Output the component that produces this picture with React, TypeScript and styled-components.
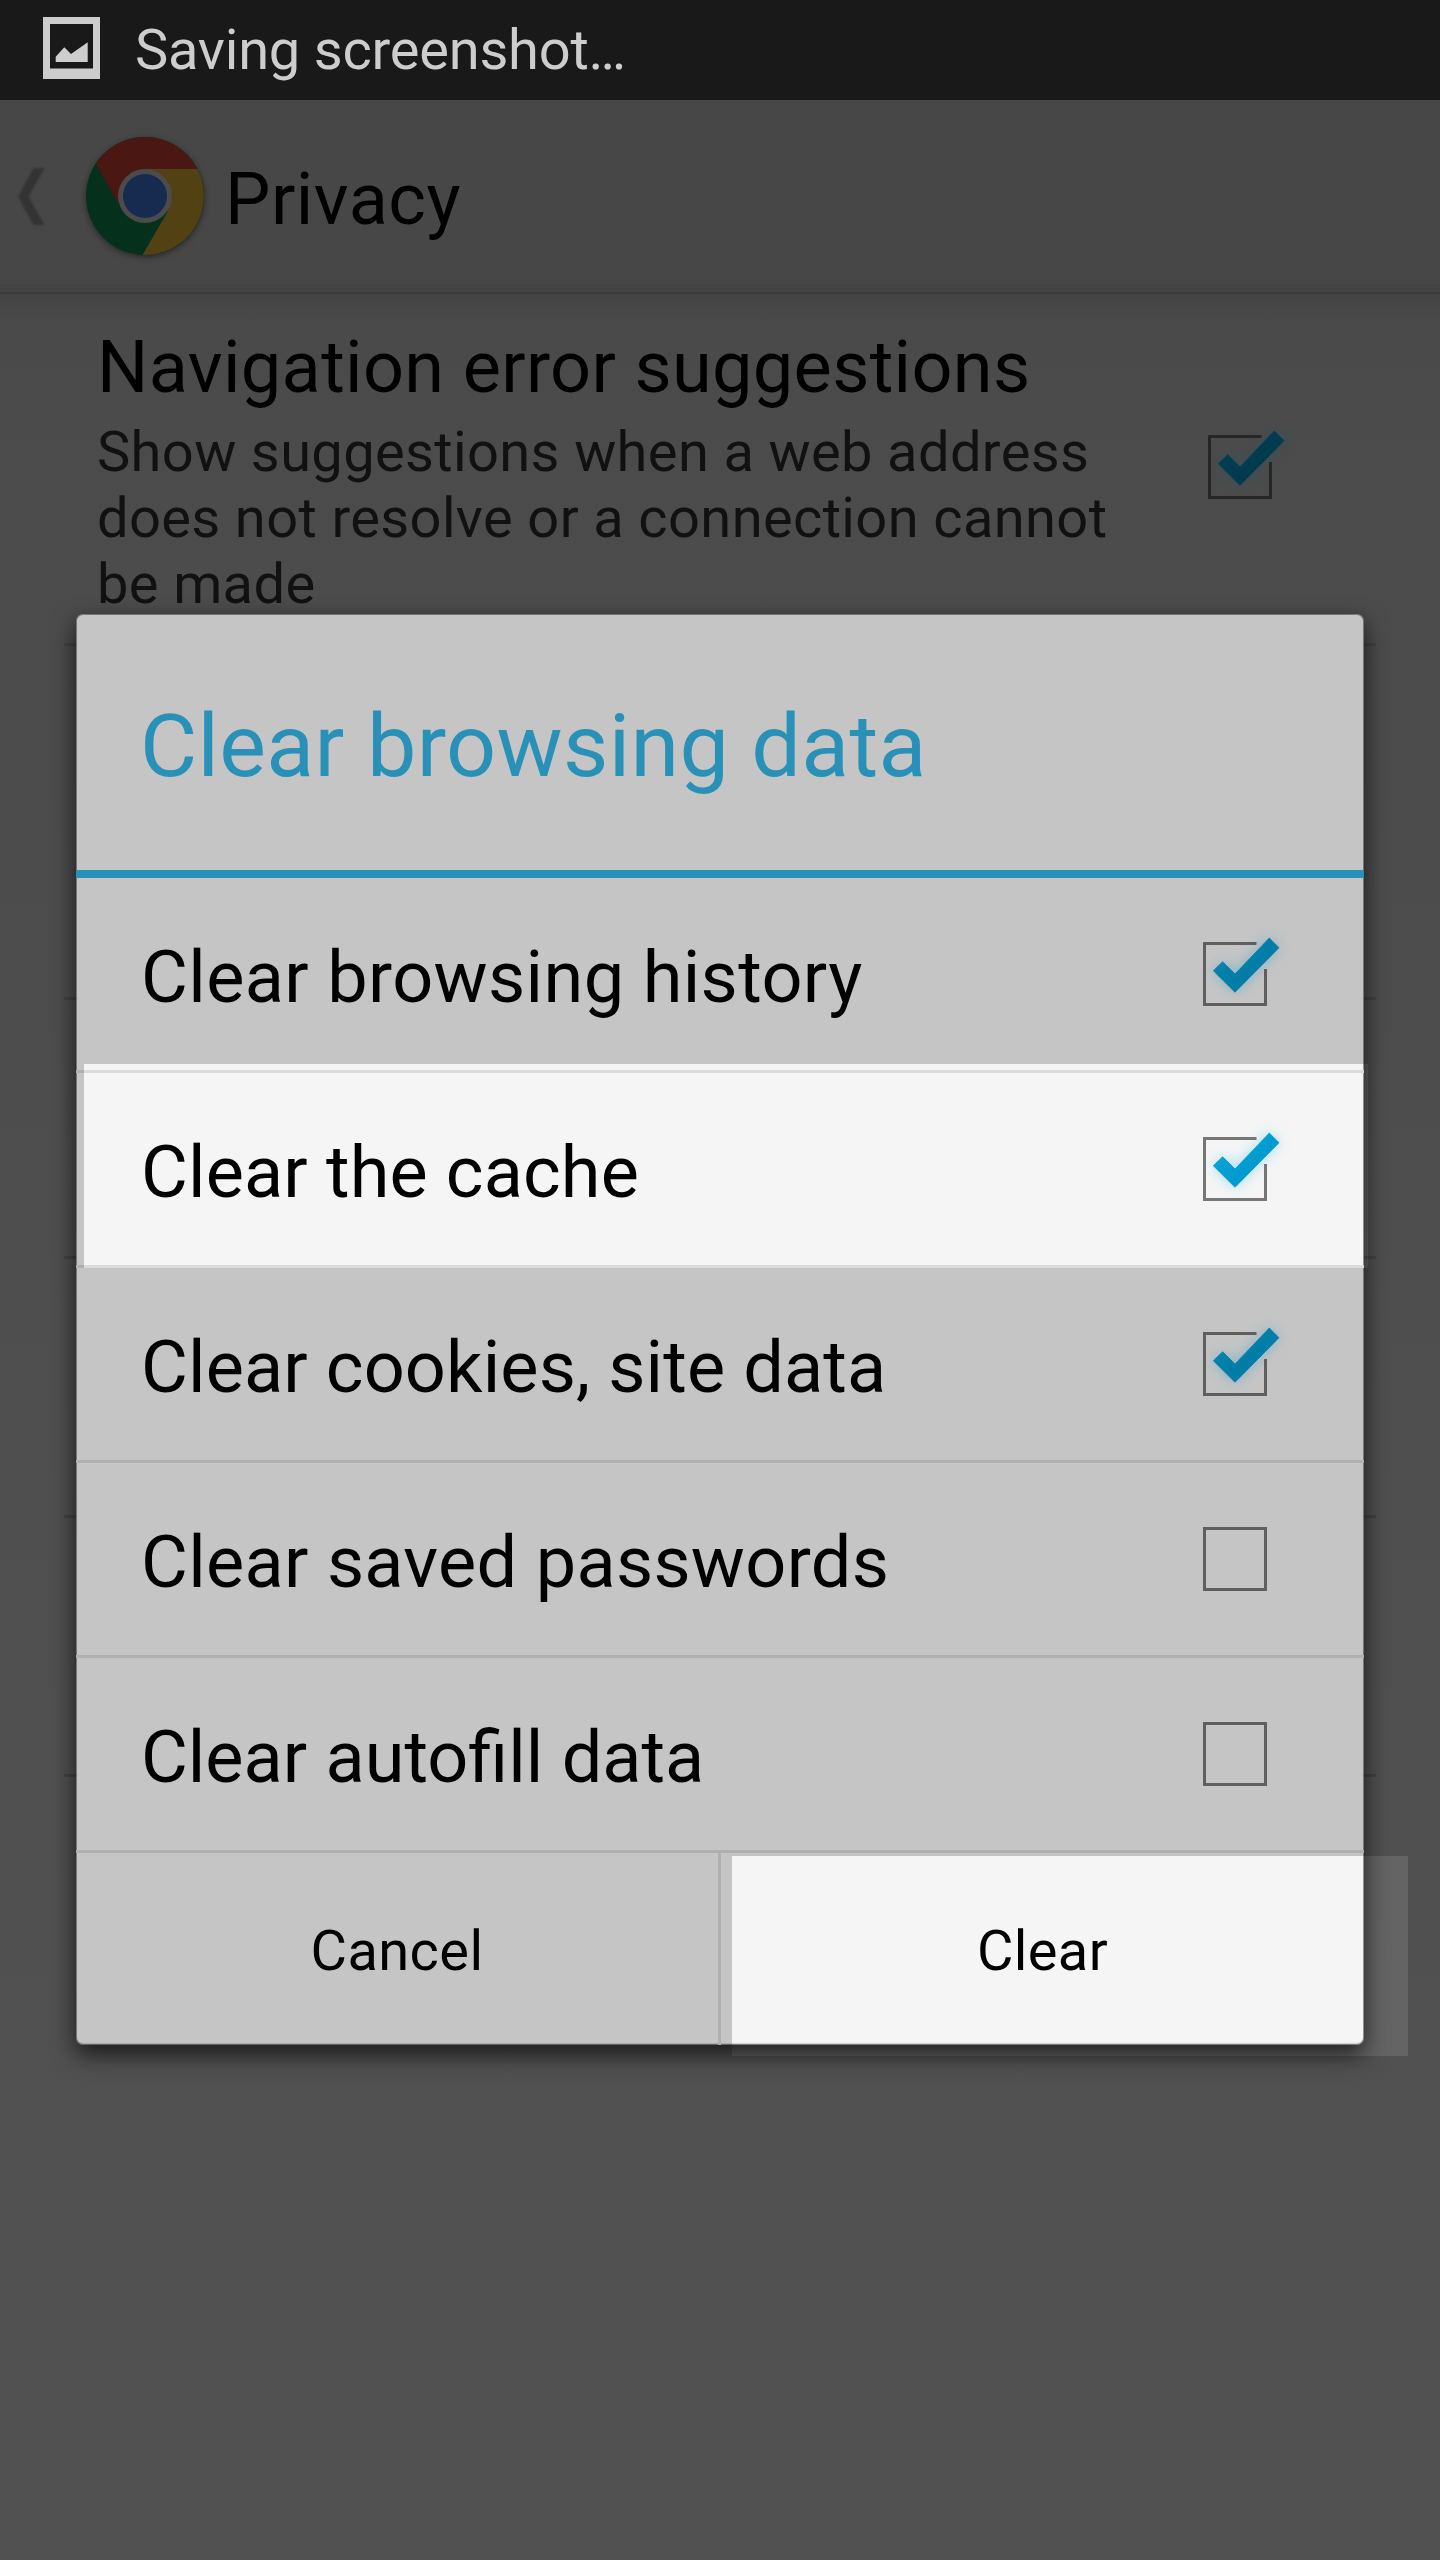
import React, { useState } from "react";
import styled, { createGlobalStyle, css } from "styled-components";

const GlobalStyle = createGlobalStyle`
  *, *::before, *::after { box-sizing: border-box; }
  body { margin: 0; background: #515151; }
`;

const Screen = styled.div`
  position: relative;
  display: flex;
  flex-direction: column;
  width: 1440px;
  height: 2560px;
  overflow: hidden;
  background: linear-gradient(#494949 295px, #4b4b4b 420px, #4d4d4d 950px, #505050 1700px, #515151);
  font-family: Roboto, "Liberation Sans", sans-serif;
  color: #000;
`;

const StatusBar = styled.header`
  display: flex;
  align-items: center;
  flex: none;
  height: 100px;
  padding-left: 43px;
  gap: 35px;
  background: #191919;
  color: #cdcdcd;
`;

const StatusIcon = styled.svg`
  width: 57px;
  height: 62px;
  margin-top: -4px;
`;

const StatusText = styled.span`
  font-size: 56px;
  line-height: 66px;
  letter-spacing: -0.22px;
`;

const ActionBar = styled.nav`
  display: flex;
  align-items: center;
  flex: none;
  height: 195px;
  padding-bottom: 3px;
  background: linear-gradient(
    #474747 184px,
    #444444 184px,
    #434343 192px,
    #3a3a3a 192px,
    #3d3d3d 194px,
    #434343 194px
  );
`;

const BackChevron = styled.svg`
  width: 27px;
  height: 57px;
  margin-left: 18px;
  overflow: visible;
  filter: blur(1px);
`;

const ChromeLogo = styled.svg`
  width: 118px;
  height: 118px;
  margin-left: 41px;
  overflow: visible;
  filter: drop-shadow(0 2px 3px rgba(0, 0, 0, 0.45));
`;

const ScreenTitle = styled.h1`
  margin: 0 0 0 21px;
  padding-top: 7px;
  font-size: 72px;
  font-weight: 400;
  line-height: 85px;
  letter-spacing: 0.5px;
`;

const PreferenceList = styled.main`
  display: flex;
  flex-direction: column;
  padding: 0 64px;
  background: linear-gradient(rgba(0, 0, 0, 0.06), transparent 30px);
`;

const Preference = styled.section<{ $height: number }>`
  display: flex;
  justify-content: space-between;
  height: ${(p) => p.$height}px;
  padding: 30px 104px 0 33px;
  border-bottom: 3px solid #424242;
`;

const PreferenceText = styled.div`
  display: flex;
  flex-direction: column;
  gap: 9px;
  width: 1060px;
`;

const PreferenceName = styled.h2`
  margin: 0;
  font-size: 72px;
  font-weight: 400;
  line-height: 85px;
  letter-spacing: 0.36px;
`;

const PreferenceSummary = styled.p`
  margin: 0;
  font-size: 56px;
  line-height: 66px;
  letter-spacing: 0.37px;
  color: #111;
`;

const PreferenceWidget = styled.div`
  display: flex;
  padding-top: 110px;
`;

const DialogLayer = styled.div`
  position: absolute;
  top: 100px;
  right: 0;
  bottom: 0;
  left: 0;
  display: flex;
  align-items: center;
  justify-content: center;
  padding-bottom: 1px;
`;

const Dialog = styled.div`
  display: flex;
  flex-direction: column;
  width: 1288px;
  height: 1431px;
  border-radius: 7px;
  background: #c5c5c5;
  box-shadow:
    inset 0 0 0 1px rgba(0, 0, 0, 0.4),
    inset 0 -2px 1px rgba(0, 0, 0, 0.15),
    0 9px 23px rgba(0, 0, 0, 0.7);
`;

const DialogTitle = styled.h2`
  height: 264px;
  margin: 0;
  padding: 80px 64px 0;
  border-bottom: 8px solid #2991b8;
  font-size: 88px;
  font-weight: 400;
  line-height: 103px;
  letter-spacing: 0.34px;
  color: #2991b8;
`;

const Option = styled.div`
  position: relative;
  display: flex;
  align-items: center;
  justify-content: space-between;
  height: 195px;
  padding: 0 97px 0 65px;
  border-bottom: 3px solid #b0b0b0;
  cursor: pointer;
`;

const OptionLabel = styled.span<{ $tracking: number }>`
  padding-top: 7px;
  font-size: 72px;
  line-height: 85px;
  ${(p) =>
    p.$tracking
      ? css`
          letter-spacing: ${p.$tracking}px;
        `
      : css`
          word-spacing: 0.6px;
        `}
`;

const ButtonBar = styled.div`
  display: grid;
  grid-template-columns: 642px 1fr;
  height: 192px;
`;

const DialogButton = styled.button`
  position: relative;
  padding: 4px 0 0;
  border: 0;
  background: none;
  font: 400 56px/66px Roboto, "Liberation Sans", sans-serif;
  letter-spacing: 0.4px;
  color: #000;
  cursor: pointer;

  & + & {
    border-left: 3px solid #b0b0b0;
  }
`;

const Spotlight = styled.i<{ $inset: string }>`
  position: absolute;
  inset: ${(p) => p.$inset};
  background: #323232;
  mix-blend-mode: color-dodge;
  pointer-events: none;
`;

const CheckboxArt = styled.svg`
  flex: none;
  width: 64px;
  height: 64px;
  overflow: visible;
`;

interface CheckboxProps {
  checked: boolean;
  dim?: boolean;
}

function Checkbox({ checked, dim = false }: CheckboxProps) {
  const stroke = dim ? "#272727" : "#5e5e5e";
  const id = dim ? "tick-dim" : "tick";
  const tick = "M10.3 28.7 L19.7 19.7 L32 32 L66.3 -4 L76 5.7 L32 50.3 Z";
  return (
    <CheckboxArt viewBox="0 0 64 64">
      <defs>
        <linearGradient id={id} x1="0" y1="0" x2="1" y2="1">
          <stop offset="0" stopColor={dim ? "#00435a" : "#0a86ae"} />
          <stop offset="1" stopColor={dim ? "#003446" : "#0076a2"} />
        </linearGradient>
        <filter id={id + "-glow"} x="-50%" y="-50%" width="200%" height="200%">
          <feGaussianBlur stdDeviation="7" />
        </filter>
        <filter id={id + "-soft"} x="-10%" y="-10%" width="120%" height="120%">
          <feGaussianBlur stdDeviation="0.7" />
        </filter>
      </defs>
      {checked ? (
        <>
          <path
            d={tick}
            fill={dim ? "#1f5468" : "#5aa6c8"}
            opacity={dim ? 0.45 : 0.65}
            filter={`url(#${id}-glow)`}
          />
          <g filter={`url(#${id}-soft)`}>
            <path d="M53.5 1.5 H1.5 V62.5 H62.5 V27" fill="none" stroke={stroke} strokeWidth="3" />
            <path d={tick} fill={`url(#${id})`} stroke={`url(#${id})`} strokeWidth="0.8" />
          </g>
        </>
      ) : (
        <rect
          x="1.5"
          y="1.5"
          width="61"
          height="61"
          fill="none"
          stroke={stroke}
          strokeWidth="3"
          filter={`url(#${id}-soft)`}
        />
      )}
    </CheckboxArt>
  );
}

const OPTIONS = [
  { label: "Clear browsing history", tracking: 0.38, on: true },
  { label: "Clear the cache", tracking: 0.16, on: true, spotlight: true },
  { label: "Clear cookies, site data", tracking: 0.14, on: true },
  { label: "Clear saved passwords", tracking: 0.32, on: false },
  { label: "Clear autofill data", tracking: 0, on: false },
];

export default function App() {
  const [checked, setChecked] = useState(OPTIONS.map((o) => o.on));
  const toggle = (index: number) =>
    setChecked((prev) => prev.map((value, i) => (i === index ? !value : value)));

  return (
    <>
      <GlobalStyle />
      <Screen>
        <StatusBar>
          <StatusIcon viewBox="0 0 57 62">
            <path fillRule="evenodd" fill="#cdcdcd" d="M0 0H57V62H0Z M7 7V51.5H50V7Z" />
            <path fill="#cdcdcd" d="M12.7 39.7 L21.3 30.3 L28 37 L44.7 25.3 V45 H12.7 Z" />
          </StatusIcon>
          <StatusText>Saving screenshot…</StatusText>
        </StatusBar>

        <ActionBar>
          <BackChevron viewBox="0 0 27 57">
            <path fill="#333" d="M0 28.5 L15.5 0 H26.5 L10.5 28.5 L26.5 57 H15.5 Z" />
          </BackChevron>
          <ChromeLogo viewBox="-59 -59 118 118">
            <circle r="59" fill="#05301c" />
            <path fill="#4a1713" d="M-49.2 -32.5 A59 59 0 0 1 52.3 -27 H0 L-27 7 Z" />
            <path fill="#524113" d="M52.3 -27 A59 59 0 0 1 -2.5 59 L23 15 L0 -27 Z" />
            <circle r="27" fill="#4b4b4b" />
            <circle r="22" fill="#172a4f" />
          </ChromeLogo>
          <ScreenTitle>Privacy</ScreenTitle>
        </ActionBar>

        <PreferenceList>
          <Preference $height={351}>
            <PreferenceText>
              <PreferenceName>Navigation error suggestions</PreferenceName>
              <PreferenceSummary>
                Show suggestions when a web address does not resolve or a connection cannot be made
              </PreferenceSummary>
            </PreferenceText>
            <PreferenceWidget>
              <Checkbox checked dim />
            </PreferenceWidget>
          </Preference>
          <Preference $height={354} />
          <Preference $height={259} />
          <Preference $height={259} />
          <Preference $height={259} />
        </PreferenceList>

        <DialogLayer>
          <Dialog role="dialog">
            <DialogTitle>Clear browsing data</DialogTitle>
            {OPTIONS.map((option, i) => (
              <Option key={option.label} onClick={() => toggle(i)}>
                <OptionLabel $tracking={option.tracking}>{option.label}</OptionLabel>
                <Checkbox checked={checked[i]} />
                {option.spotlight && <Spotlight $inset="-9px -4px -3px 8px" />}
              </Option>
            ))}
            <ButtonBar>
              <DialogButton>Cancel</DialogButton>
              <DialogButton>
                Clear
                <Spotlight $inset="3px -44px -11px 11px" />
              </DialogButton>
            </ButtonBar>
          </Dialog>
        </DialogLayer>
      </Screen>
    </>
  );
}
